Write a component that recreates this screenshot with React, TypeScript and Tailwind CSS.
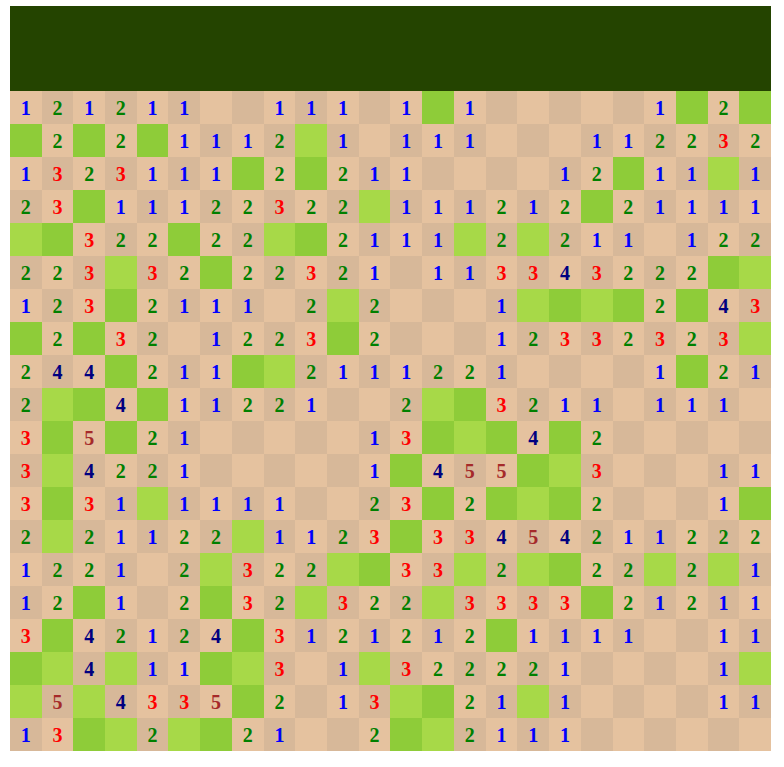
// x = covered cell, 0 = open cell with no number
const board = [
  "121211001110" + "1x1000001x2x",
  "x2x2x1112x10" + "111000112232",
  "1323111x2x21" + "1000012x11x1",
  "23x11122322x" + "111212x21111",
  "xx322x22xx21" + "11x2x2110122",
  "223x32x22321" + "0113343222xx",
  "123x211102x2" + "0001xxxx2x43",
  "x2x3201223x2" + "00012332323x",
  "244x211xx211" + "122100001x21",
  "2xx4x1122100" + "2xx321101110",
  "3x5x21000001" + "3xxx4x200000",
  "3x4221000001" + "x455xx300011",
  "3x31x1111002" + "3x2xxx20001x",
  "2x21122x1123" + "x33454211222",
  "122102x322xx" + "33x2xx22x2x1",
  "12x102x32x32" + "2x3333x21211",
  "3x42124x3121" + "212x11110011",
  "xx4x11xx301x" + "32222100001x",
  "x5x4335x2013" + "xx21x1000011",
  "13xx2xx21002" + "xx2111000000",
];

const digitColors: Record<string, string> = {
  "1": "text-[#0000ff]",
  "2": "text-[#008000]",
  "3": "text-[#ff0000]",
  "4": "text-[#000080]",
  "5": "text-[#a52a2a]",
};

function Cell({ value, even }: { value: string; even: boolean }) {
  if (value === "x") {
    return <div className={even ? "bg-[#a7d948]" : "bg-[#8ecc39]"} />;
  }
  return (
    <div
      className={`flex items-center justify-center text-xl font-bold ${even ? "bg-[#e5c29f]" : "bg-[#d7b899]"} ${digitColors[value] ?? ""}`}
    >
      {value === "0" ? "" : value}
    </div>
  );
}

export default function App() {
  return (
    <div className="min-h-[767px] bg-white pt-[6px] pl-[9.85px] font-['Liberation_Serif',serif]">
      <div className="w-[761.28px]">
        {/* Header */}
        <div className="h-[85px] bg-[#244400]" />

        {/* Board */}
        <div className="grid grid-cols-[repeat(24,1fr)] auto-rows-[33px]">
          {board.flatMap((row, r) =>
            row.split("").map((value, c) => (
              <Cell key={`${r}-${c}`} value={value} even={(r + c) % 2 === 0} />
            )),
          )}
        </div>
      </div>
    </div>
  );
}
